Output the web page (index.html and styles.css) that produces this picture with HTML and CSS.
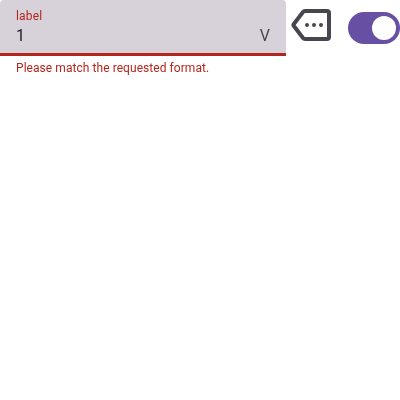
FILE: index.html
```
<!DOCTYPE html>
<html lang="en">
<head>
<meta charset="utf-8">
<title>Field</title>
<link rel="stylesheet" href="styles.css">
</head>
<body>
<div class="row">
  <div class="field">
    <div class="box">
      <div class="content">
        <span class="label">label</span>
        <span class="value">1</span>
      </div>
      <span class="suffix">V</span>
    </div>
    <div class="error">Please match the requested format.</div>
  </div>
  <svg class="icon" viewBox="0 0 40 32">
    <path class="tag" d="M14 2H36Q38 2 38 4V28Q38 30 36 30H14Q12.800 30 12 29L2.700 16.800Q2.100 16 2.700 15.200L12 3Q12.800 2 14 2Z"/>
    <circle cx="16" cy="16" r="2"/><circle cx="23" cy="16" r="2"/><circle cx="30" cy="16" r="2"/>
  </svg>
  <div class="switch"><div class="handle"></div></div>
</div>
</body>
</html>
```
FILE: styles.css
```
body {
  margin: 0;
  background: #fff;
  font-family: Roboto, sans-serif;
}
.row {
  display: flex;
  align-items: flex-start;
  will-change: transform;
}
.field {
  width: 286px;
}
.box {
  box-sizing: border-box;
  height: 56px;
  padding: 8px 16px 0;
  display: flex;
  justify-content: space-between;
  align-items: flex-start;
  background: #d7d1d9;
  border-bottom: 3px solid #b3261e;
  border-radius: 4px 4px 0 0;
}
.content {
  display: flex;
  flex-direction: column;
}
.label {
  font-size: 12px;
  line-height: 16px;
  letter-spacing: 0.16px;
  color: #b3261e;
}
.value {
  font-size: 16px;
  line-height: 24px;
  color: #1d1b20;
}
.suffix {
  margin-top: 16px;
  font-size: 16px;
  line-height: 24px;
  color: #49454f;
}
.error {
  padding: 4px 16px 0;
  font-size: 12px;
  line-height: 16px;
  letter-spacing: 0.06px;
  color: #b3261e;
}
.icon {
  flex: none;
  width: 40px;
  height: 32px;
  margin: 9px 0 0 5px;
  fill: #49454f;
}
.tag {
  fill: none;
  stroke: #49454f;
  stroke-width: 4;
}
.switch {
  box-sizing: border-box;
  width: 52px;
  height: 32px;
  margin: 12px 0 0 17px;
  padding: 4px;
  display: flex;
  justify-content: flex-end;
  border-radius: 16px;
  background: #6750a4;
}
.handle {
  width: 24px;
  height: 24px;
  border-radius: 50%;
  background: #fff;
}
```
